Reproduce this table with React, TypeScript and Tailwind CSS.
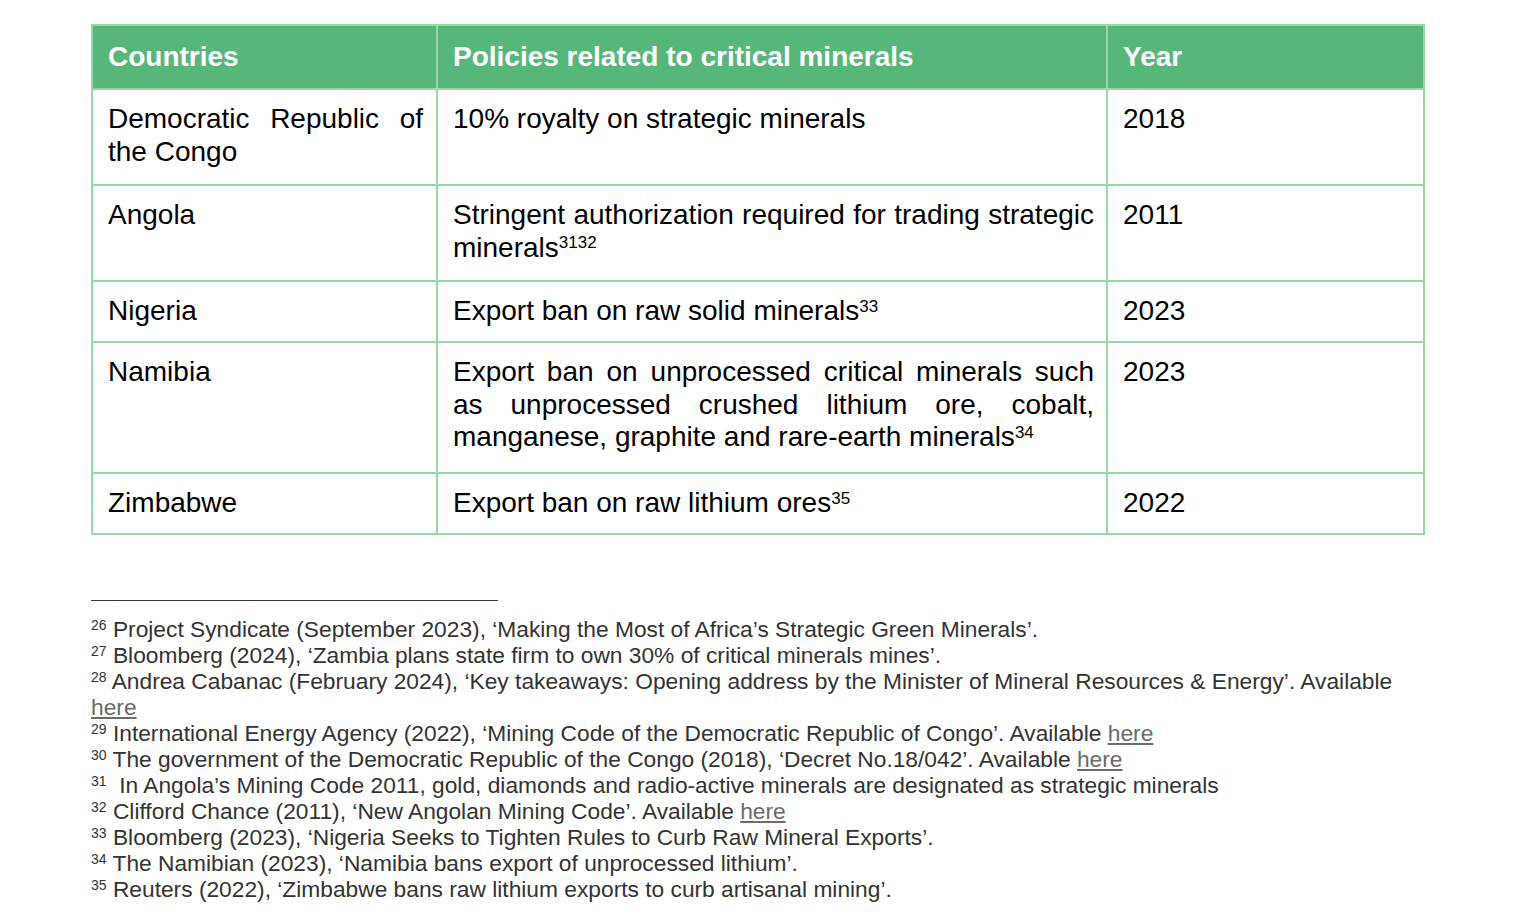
const rows = [
  {
    country: "Democratic Republic of the Congo",
    policy: "10% royalty on strategic minerals",
    sup: "",
    year: "2018",
    h: "h-[96px]",
  },
  {
    country: "Angola",
    policy: "Stringent authorization required for trading strategic minerals",
    sup: "3132",
    year: "2011",
    h: "h-[96px]",
  },
  {
    country: "Nigeria",
    policy: "Export ban on raw solid minerals",
    sup: "33",
    year: "2023",
    h: "h-[61px]",
  },
  {
    country: "Namibia",
    policy:
      "Export ban on unprocessed critical minerals such as unprocessed crushed lithium ore, cobalt, manganese, graphite and rare-earth minerals",
    sup: "34",
    year: "2023",
    h: "h-[131px]",
  },
  {
    country: "Zimbabwe",
    policy: "Export ban on raw lithium ores",
    sup: "35",
    year: "2022",
    h: "h-[61px]",
  },
];

const Here = () => <span className="text-[#6b6b6b] underline underline-offset-2">here</span>;

const footnotes: { n: string; body: React.ReactNode }[] = [
  { n: "26", body: <>Project Syndicate (September 2023), ‘Making the Most of Africa’s Strategic Green Minerals’.</> },
  { n: "27", body: <>Bloomberg (2024), ‘Zambia plans state firm to own 30% of critical minerals mines’.</> },
  {
    n: "28",
    body: (
      <>
        Andrea Cabanac (February 2024), ‘Key takeaways: Opening address by the Minister of Mineral Resources &amp; Energy’. Available <Here />
      </>
    ),
  },
  {
    n: "29",
    body: (
      <>
        International Energy Agency (2022), ‘Mining Code of the Democratic Republic of Congo’. Available <Here />
      </>
    ),
  },
  {
    n: "30",
    body: (
      <>
        The government of the Democratic Republic of the Congo (2018), ‘Decret No.18/042’. Available <Here />
      </>
    ),
  },
  {
    n: "31",
    body: <>&nbsp;In Angola’s Mining Code 2011, gold, diamonds and radio-active minerals are designated as strategic minerals</>,
  },
  {
    n: "32",
    body: (
      <>
        Clifford Chance (2011), ‘New Angolan Mining Code’. Available <Here />
      </>
    ),
  },
  { n: "33", body: <>Bloomberg (2023), ‘Nigeria Seeks to Tighten Rules to Curb Raw Mineral Exports’.</> },
  { n: "34", body: <>The Namibian (2023), ‘Namibia bans export of unprocessed lithium’.</> },
  { n: "35", body: <>Reuters (2022), ‘Zimbabwe bans raw lithium exports to curb artisanal mining’.</> },
];

export default function App() {
  return (
    <div className="min-h-screen bg-white pl-[91px] pt-[24px] font-['Liberation_Sans',Arial,sans-serif] text-black">
      <div className="w-[1332px]">
        {/* Table */}
        <table className="w-full table-fixed border-collapse border-2 border-[#98d8a6] text-[28px] leading-[32.5px]">
          <colgroup>
            <col className="w-[345px]" />
            <col className="w-[670px]" />
            <col className="w-[317px]" />
          </colgroup>
          <thead>
            <tr className="h-[64px] bg-[#57b77b] text-white">
              <th className="border-2 border-[#98d8a6] pl-[15px] text-left align-middle font-bold">Countries</th>
              <th className="border-2 border-[#98d8a6] pl-[15px] text-left align-middle font-bold">
                Policies related to critical minerals
              </th>
              <th className="border-2 border-[#98d8a6] pl-[15px] text-left align-middle font-bold">Year</th>
            </tr>
          </thead>
          <tbody>
            {rows.map((r) => (
              <tr key={r.country} className={r.h}>
                <td className="border-2 border-[#98d8a6] pb-2 pl-[15px] pr-[13px] pt-[13px] text-justify align-top">
                  {r.country}
                </td>
                <td className="border-2 border-[#98d8a6] pb-2 pl-[15px] pr-[12px] pt-[13px] text-justify align-top">
                  {r.policy}
                  {r.sup && <sup className="text-[17px]">{r.sup}</sup>}
                </td>
                <td className="border-2 border-[#98d8a6] pb-2 pl-[15px] pt-[13px] align-top">{r.year}</td>
              </tr>
            ))}
          </tbody>
        </table>

        {/* Footnotes */}
        <div className="mt-[65px] h-px w-[407px] bg-[#3a3a3a]" />
        <div className="mt-[15px] text-[22.75px] leading-[26px] text-[#333333]">
          {footnotes.map((f) => (
            <p key={f.n}>
              <sup className="text-[14px]">{f.n}</sup> {f.body}
            </p>
          ))}
        </div>
      </div>
    </div>
  );
}
